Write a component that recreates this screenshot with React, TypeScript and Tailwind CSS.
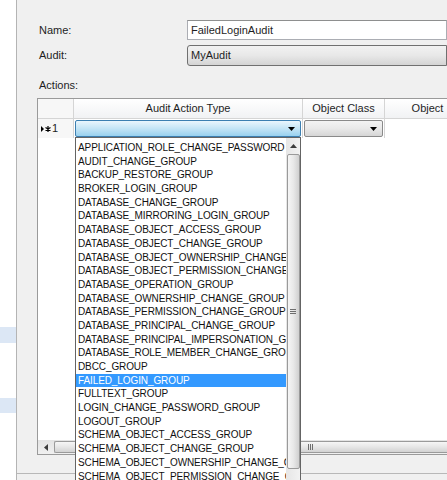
import React from "react";

const items = [
  "APPLICATION_ROLE_CHANGE_PASSWORD",
  "AUDIT_CHANGE_GROUP",
  "BACKUP_RESTORE_GROUP",
  "BROKER_LOGIN_GROUP",
  "DATABASE_CHANGE_GROUP",
  "DATABASE_MIRRORING_LOGIN_GROUP",
  "DATABASE_OBJECT_ACCESS_GROUP",
  "DATABASE_OBJECT_CHANGE_GROUP",
  "DATABASE_OBJECT_OWNERSHIP_CHANGE_GROUP",
  "DATABASE_OBJECT_PERMISSION_CHANGE_GROUP",
  "DATABASE_OPERATION_GROUP",
  "DATABASE_OWNERSHIP_CHANGE_GROUP",
  "DATABASE_PERMISSION_CHANGE_GROUP",
  "DATABASE_PRINCIPAL_CHANGE_GROUP",
  "DATABASE_PRINCIPAL_IMPERSONATION_GROUP",
  "DATABASE_ROLE_MEMBER_CHANGE_GROUP",
  "DBCC_GROUP",
  "FAILED_LOGIN_GROUP",
  "FULLTEXT_GROUP",
  "LOGIN_CHANGE_PASSWORD_GROUP",
  "LOGOUT_GROUP",
  "SCHEMA_OBJECT_ACCESS_GROUP",
  "SCHEMA_OBJECT_CHANGE_GROUP",
  "SCHEMA_OBJECT_OWNERSHIP_CHANGE_GROUP",
  "SCHEMA_OBJECT_PERMISSION_CHANGE_GROUP",
];

function DownArrow() {
  return (
    <svg width="7" height="4" viewBox="0 0 7 4">
      <path d="M0 0 H7 L3.5 4 Z" fill="#000" />
    </svg>
  );
}

export default function App() {
  return (
    <div
      className="w-[447px] h-[480px] overflow-hidden bg-[#f0f0f0] flex relative text-[#1e1e1e]"
      style={{ fontFamily: '"Liberation Sans", Arial, sans-serif' }}
    >
      {/* left tree panel */}
      <div className="w-[17px] shrink-0 bg-white border-r border-[#b4b4b4] flex flex-col">
        <div className="mt-[327px] h-[16px] bg-[#dce7f5]" />
        <div className="mt-[55px] h-[15px] bg-[#dce7f5]" />
      </div>

      {/* dialog body */}
      <div className="flex-1 flex flex-col pt-[20px] min-w-0">
        <div className="flex items-center h-[20px] pl-[22px]">
          <span className="w-[148px] shrink-0 text-[11px]">Name:</span>
          <div className="flex-1 h-[20px] bg-white border border-[#abadb3] border-t-[#8e8f8f] flex items-center pl-[3px] text-[11px]">
            FailedLoginAudit
          </div>
        </div>
        <div className="flex items-center h-[21px] mt-[5px] pl-[22px]">
          <span className="w-[148px] shrink-0 text-[11px]">Audit:</span>
          <div className="flex-1 h-[21px] rounded-l-[3px] border border-[#707070] bg-gradient-to-b from-[#f2f2f2] via-[#e8e8e8] to-[#d4d4d4] flex items-center pl-[3px] text-[11px]">
            MyAudit
          </div>
        </div>
        <div className="mt-[12px] h-[14px] pl-[22px] text-[11px] leading-[14px]">Actions:</div>

        {/* grid */}
        <div className="mt-[6px] ml-[20px] h-[357px] border border-r-0 border-[#9a9a9a] bg-white flex flex-col overflow-hidden">
          <div className="flex h-[20px] border-b border-[#d5d5d5] bg-gradient-to-b from-white to-[#f1f2f4] text-[11px] shrink-0">
            <div className="w-[36px] shrink-0 border-r border-[#d5d5d5] bg-[#f7f7f7]" />
            <div className="w-[229px] shrink-0 border-r border-[#d5d5d5] flex items-center justify-center">Audit Action Type</div>
            <div className="w-[82px] shrink-0 border-r border-[#d5d5d5] flex items-center justify-center">Object Class</div>
            <div className="w-[85px] shrink-0 flex items-center justify-center">Object</div>
          </div>
          <div className="flex h-[19px] shrink-0">
            <div className="w-[36px] shrink-0 border-r border-[#d5d5d5] bg-[#f7f7f7] flex items-center pl-[3px] gap-[1px] text-[11px]">
              <svg width="10" height="8" viewBox="0 0 10 8">
                <path d="M0 1 L3 4 L0 7 Z" fill="#000" />
                <path d="M7 1 V7 M4.5 2.5 L9.5 5.5 M4.5 5.5 L9.5 2.5" stroke="#000" strokeWidth="1.2" />
              </svg>
              <span>1</span>
            </div>
            <div className="w-[229px] shrink-0 border-r border-[#d5d5d5] p-[1px]">
              <div className="h-full border border-[#3c7fb1] rounded-[2px] bg-gradient-to-b from-[#eaf6fd] via-[#c4e5f6] to-[#98d1ef] flex items-center justify-end pr-[5px]">
                <DownArrow />
              </div>
            </div>
            <div className="w-[82px] shrink-0 border-r border-[#d5d5d5] p-[1px]">
              <div className="h-full border border-[#8a8a8a] rounded-[2px] bg-gradient-to-b from-[#f4f4f4] via-[#e9e9e9] to-[#d6d6d6] flex items-center justify-end pr-[5px]">
                <DownArrow />
              </div>
            </div>
            <div className="w-[85px] shrink-0" />
          </div>
          <div className="flex-1" />
          {/* horizontal scrollbar */}
          <div className="h-[14px] shrink-0 flex bg-gradient-to-b from-[#e3e3e3] to-[#f0f0f0]">
            <div className="w-[16px] shrink-0 flex items-center justify-center">
              <svg width="4" height="7" viewBox="0 0 4 7">
                <path d="M4 0 V7 L0 3.5 Z" fill="#3c3c3c" />
              </svg>
            </div>
            <div className="flex-1 my-[1px] border border-r-0 border-[#9a9a9a] rounded-l-[2px] bg-gradient-to-b from-[#f6f6f6] via-[#e6e6e6] to-[#d2d2d2] flex items-center pl-[253px]">
              <div className="flex gap-[1px]">
                <div className="w-[1px] h-[6px] bg-[#6e6e6e]" />
                <div className="w-[1px] h-[6px] bg-[#6e6e6e]" />
                <div className="w-[1px] h-[6px] bg-[#6e6e6e]" />
              </div>
            </div>
          </div>
        </div>
        <div className="mt-[18px] h-[1px] bg-[#b8b8b8]" />
      </div>

      {/* dropdown list */}
      <div className="absolute left-[75px] top-[137px] w-[226px] h-[360px] bg-white border border-[#646464] flex">
        <div className="flex-1 min-w-0 pt-[3px] overflow-hidden">
          {items.map((it) => (
            <div
              key={it}
              className={`h-[13.7px] leading-[13.7px] pl-[2px] text-[10px] tracking-[-0.1px] whitespace-nowrap overflow-hidden ${
                it === "FAILED_LOGIN_GROUP" ? "bg-[#3399ff] text-white" : "text-[#111]"
              }`}
            >
              {it}
            </div>
          ))}
        </div>
        <div className="w-[14px] shrink-0 bg-gradient-to-r from-[#e6e6e6] to-[#f2f2f2] flex flex-col items-center">
          <div className="h-[16px] w-full flex items-center justify-center">
            <svg width="7" height="4" viewBox="0 0 7 4">
              <path d="M0 4 H7 L3.5 0 Z" fill="#3c3c3c" />
            </svg>
          </div>
          <div className="w-[13px] h-[315px] border border-[#9a9a9a] rounded-[2px] bg-gradient-to-r from-[#f6f6f6] via-[#e8e8e8] to-[#d0d0d0] flex flex-col items-center justify-center gap-[1px]">
            <div className="w-[6px] h-[1px] bg-[#6e6e6e]" />
            <div className="w-[6px] h-[1px] bg-[#6e6e6e]" />
            <div className="w-[6px] h-[1px] bg-[#6e6e6e]" />
          </div>
        </div>
      </div>
    </div>
  );
}
